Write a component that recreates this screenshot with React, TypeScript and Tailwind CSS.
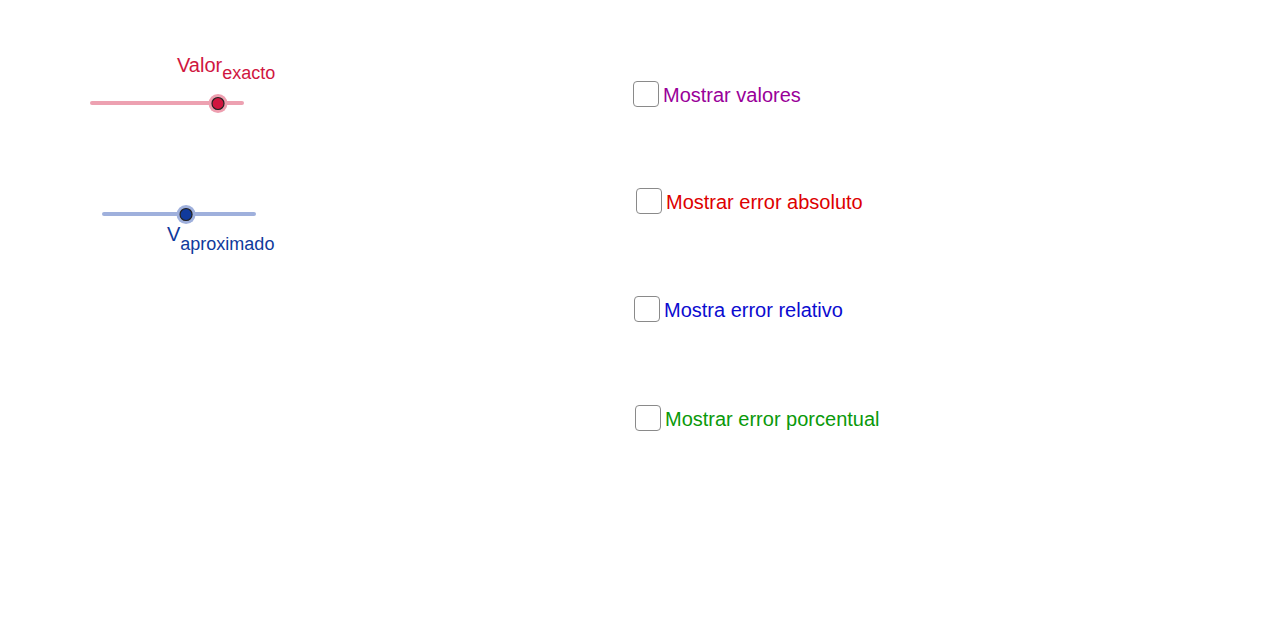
import { useState } from 'react';

// Slider track + knob, drawn like the applet's point-on-segment sliders
function SliderTrack({
  value,
  track,
  fill,
  halo,
}: {
  value: number;
  track: string;
  fill: string;
  halo: string;
}) {
  const width = 158;
  const x = 4 + value * (width - 8);
  return (
    <svg width={width} height={22} className="block overflow-visible">
      <line x1={4} y1={11} x2={width - 4} y2={11} stroke={track} strokeWidth={4} strokeLinecap="round" />
      <circle cx={x} cy={11.5} r={9.5} fill={halo} />
      <circle cx={x} cy={11.5} r={6} fill={fill} stroke="#222" strokeWidth={1.2} />
    </svg>
  );
}

function Check({ label, color, className }: { label: string; color: string; className: string }) {
  const [on, setOn] = useState(false);
  return (
    <label className={`flex cursor-pointer items-center gap-[4px] ${className}`}>
      <button
        type="button"
        onClick={() => setOn(!on)}
        className="flex h-[26px] w-[26px] shrink-0 items-center justify-center rounded-[4px] border-[1.5px] border-[#8a8a8a] bg-white"
      >
        {on && (
          <svg width="16" height="16" viewBox="0 0 16 16">
            <path d="M3 8.5l3.2 3.2L13 4.5" fill="none" stroke="#444" strokeWidth="2" />
          </svg>
        )}
      </button>
      <span className={`whitespace-nowrap pt-[2px] text-[20px] leading-[23px] ${color}`}>{label}</span>
    </label>
  );
}

export default function App() {
  return (
    <div className="flex h-[636px] w-[1280px] overflow-hidden bg-white font-['Liberation_Sans',Arial,sans-serif]">
      {/* sliders */}
      <div className="flex w-[633px] shrink-0 flex-col pl-[88px] pt-[54px]">
        <div className="ml-[89px] whitespace-nowrap text-[20px] leading-[23px] text-[#d0163f]">
          Valor<sub className="relative top-[7px] align-baseline text-[18px]">exacto</sub>
        </div>
        <div className="mt-[15px]">
          <SliderTrack value={0.84} track="#eda1b1" fill="#d0163f" halo="#ee9fb0" />
        </div>

        <div className="ml-[12px] mt-[89px]">
          <SliderTrack value={0.547} track="#9fb0dc" fill="#103a9c" halo="#9fb0dc" />
        </div>
        <div className="ml-[79px] mt-[-2px] whitespace-nowrap text-[20px] leading-[23px] text-[#103a9c]">
          V<sub className="relative top-[9px] align-baseline text-[18px]">aproximado</sub>
        </div>
      </div>

      {/* checkboxes */}
      <div className="flex flex-col gap-[82px] pt-[81px]">
        <Check label="Mostrar valores" color="text-[#990099]" className="ml-0" />
        <Check label="Mostrar error absoluto" color="text-[#dd0000]" className="ml-[3px] -mt-[1px]" />
        <Check label="Mostra error relativo" color="text-[#0b0bd0]" className="ml-[1px]" />
        <Check label="Mostrar error porcentual" color="text-[#0a990a]" className="ml-[2px] mt-[1px]" />
      </div>
    </div>
  );
}
